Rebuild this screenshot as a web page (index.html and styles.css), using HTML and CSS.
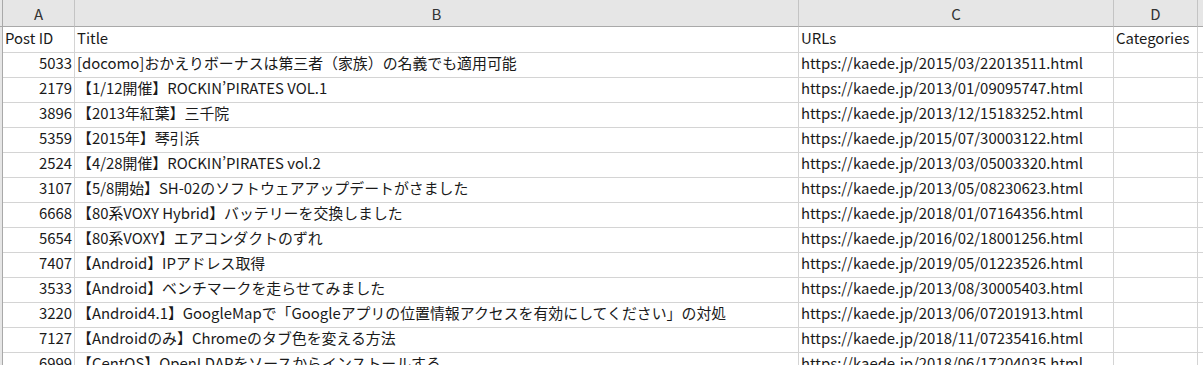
FILE: index.html
```html
<!DOCTYPE html>
<html lang="ja">
<head>
<meta charset="utf-8">
<link rel="stylesheet" href="styles.css">
</head>
<body>
<div class="sheet">
  <div class="hdr edge"></div>
  <div class="hdr">A</div>
  <div class="hdr">B</div>
  <div class="hdr">C</div>
  <div class="hdr">D</div>
  <div class="hdr rest"></div>

  <div class="edge"></div><div class="c">Post ID</div><div class="c">Title</div><div class="c">URLs</div><div class="c">Categories</div><div class="c rest"></div>
  <div class="edge"></div><div class="c n">5033</div><div class="c">[docomo]おかえりボーナスは第三者（家族）の名義でも適用可能</div><div class="c">https://kaede.jp/2015/03/22013511.html</div><div class="c"></div><div class="c rest"></div>
  <div class="edge"></div><div class="c n">2179</div><div class="c">【1/12開催】ROCKIN’PIRATES VOL.1</div><div class="c">https://kaede.jp/2013/01/09095747.html</div><div class="c"></div><div class="c rest"></div>
  <div class="edge"></div><div class="c n">3896</div><div class="c">【2013年紅葉】三千院</div><div class="c">https://kaede.jp/2013/12/15183252.html</div><div class="c"></div><div class="c rest"></div>
  <div class="edge"></div><div class="c n">5359</div><div class="c">【2015年】琴引浜</div><div class="c">https://kaede.jp/2015/07/30003122.html</div><div class="c"></div><div class="c rest"></div>
  <div class="edge"></div><div class="c n">2524</div><div class="c">【4/28開催】ROCKIN’PIRATES vol.2</div><div class="c">https://kaede.jp/2013/03/05003320.html</div><div class="c"></div><div class="c rest"></div>
  <div class="edge"></div><div class="c n">3107</div><div class="c">【5/8開始】SH-02のソフトウェアアップデートがさました</div><div class="c">https://kaede.jp/2013/05/08230623.html</div><div class="c"></div><div class="c rest"></div>
  <div class="edge"></div><div class="c n">6668</div><div class="c">【80系VOXY Hybrid】バッテリーを交換しました</div><div class="c">https://kaede.jp/2018/01/07164356.html</div><div class="c"></div><div class="c rest"></div>
  <div class="edge"></div><div class="c n">5654</div><div class="c">【80系VOXY】エアコンダクトのずれ</div><div class="c">https://kaede.jp/2016/02/18001256.html</div><div class="c"></div><div class="c rest"></div>
  <div class="edge"></div><div class="c n">7407</div><div class="c">【Android】IPアドレス取得</div><div class="c">https://kaede.jp/2019/05/01223526.html</div><div class="c"></div><div class="c rest"></div>
  <div class="edge"></div><div class="c n">3533</div><div class="c">【Android】ベンチマークを走らせてみました</div><div class="c">https://kaede.jp/2013/08/30005403.html</div><div class="c"></div><div class="c rest"></div>
  <div class="edge"></div><div class="c n">3220</div><div class="c">【Android4.1】GoogleMapで「Googleアプリの位置情報アクセスを有効にしてください」の対処</div><div class="c">https://kaede.jp/2013/06/07201913.html</div><div class="c"></div><div class="c rest"></div>
  <div class="edge"></div><div class="c n">7127</div><div class="c">【Androidのみ】Chromeのタブ色を変える方法</div><div class="c">https://kaede.jp/2018/11/07235416.html</div><div class="c"></div><div class="c rest"></div>
  <div class="edge"></div><div class="c n">6999</div><div class="c">【CentOS】OpenLDAPをソースからインストールする</div><div class="c">https://kaede.jp/2018/06/17204035.html</div><div class="c"></div><div class="c rest"></div>
</div>
</body>
</html>
```

FILE: styles.css
```css
html, body {
  margin: 0;
  padding: 0;
  background: #ffffff;
  overflow: hidden;
}
.sheet {
  display: grid;
  grid-template-columns: 3px 72px 724px 315px 84px 1fr;
  grid-auto-rows: 25px;
  grid-template-rows: 27px 26px;
  font-family: "Noto Sans CJK JP", "Liberation Sans", sans-serif;
  font-size: 14.9px;
  color: #1a1a1a;
  width: 1203px;
}
.hdr {
  background: #e6e6e6;
  border-right: 1px solid #c4c4c4;
  border-bottom: 1px solid #a9a9a9;
  color: #333333;
  display: flex;
  align-items: center;
  justify-content: center;
  font-size: 15px;
  padding-top: 1px;
}
.hdr.edge {
  border-right: 1px solid #a9a9a9;
}
.edge {
  background: #e6e6e6;
  border-right: 1px solid #a9a9a9;
}
.hdr.rest, .c.rest {
  border-right: none;
}
.c {
  border-right: 1px solid #d4d4d4;
  border-bottom: 1px solid #d4d4d4;
  display: flex;
  align-items: center;
  padding: 0 2px 5px 2px;
  white-space: nowrap;
  overflow: hidden;
  min-width: 0;
}
.c.n {
  justify-content: flex-end;
}
```
